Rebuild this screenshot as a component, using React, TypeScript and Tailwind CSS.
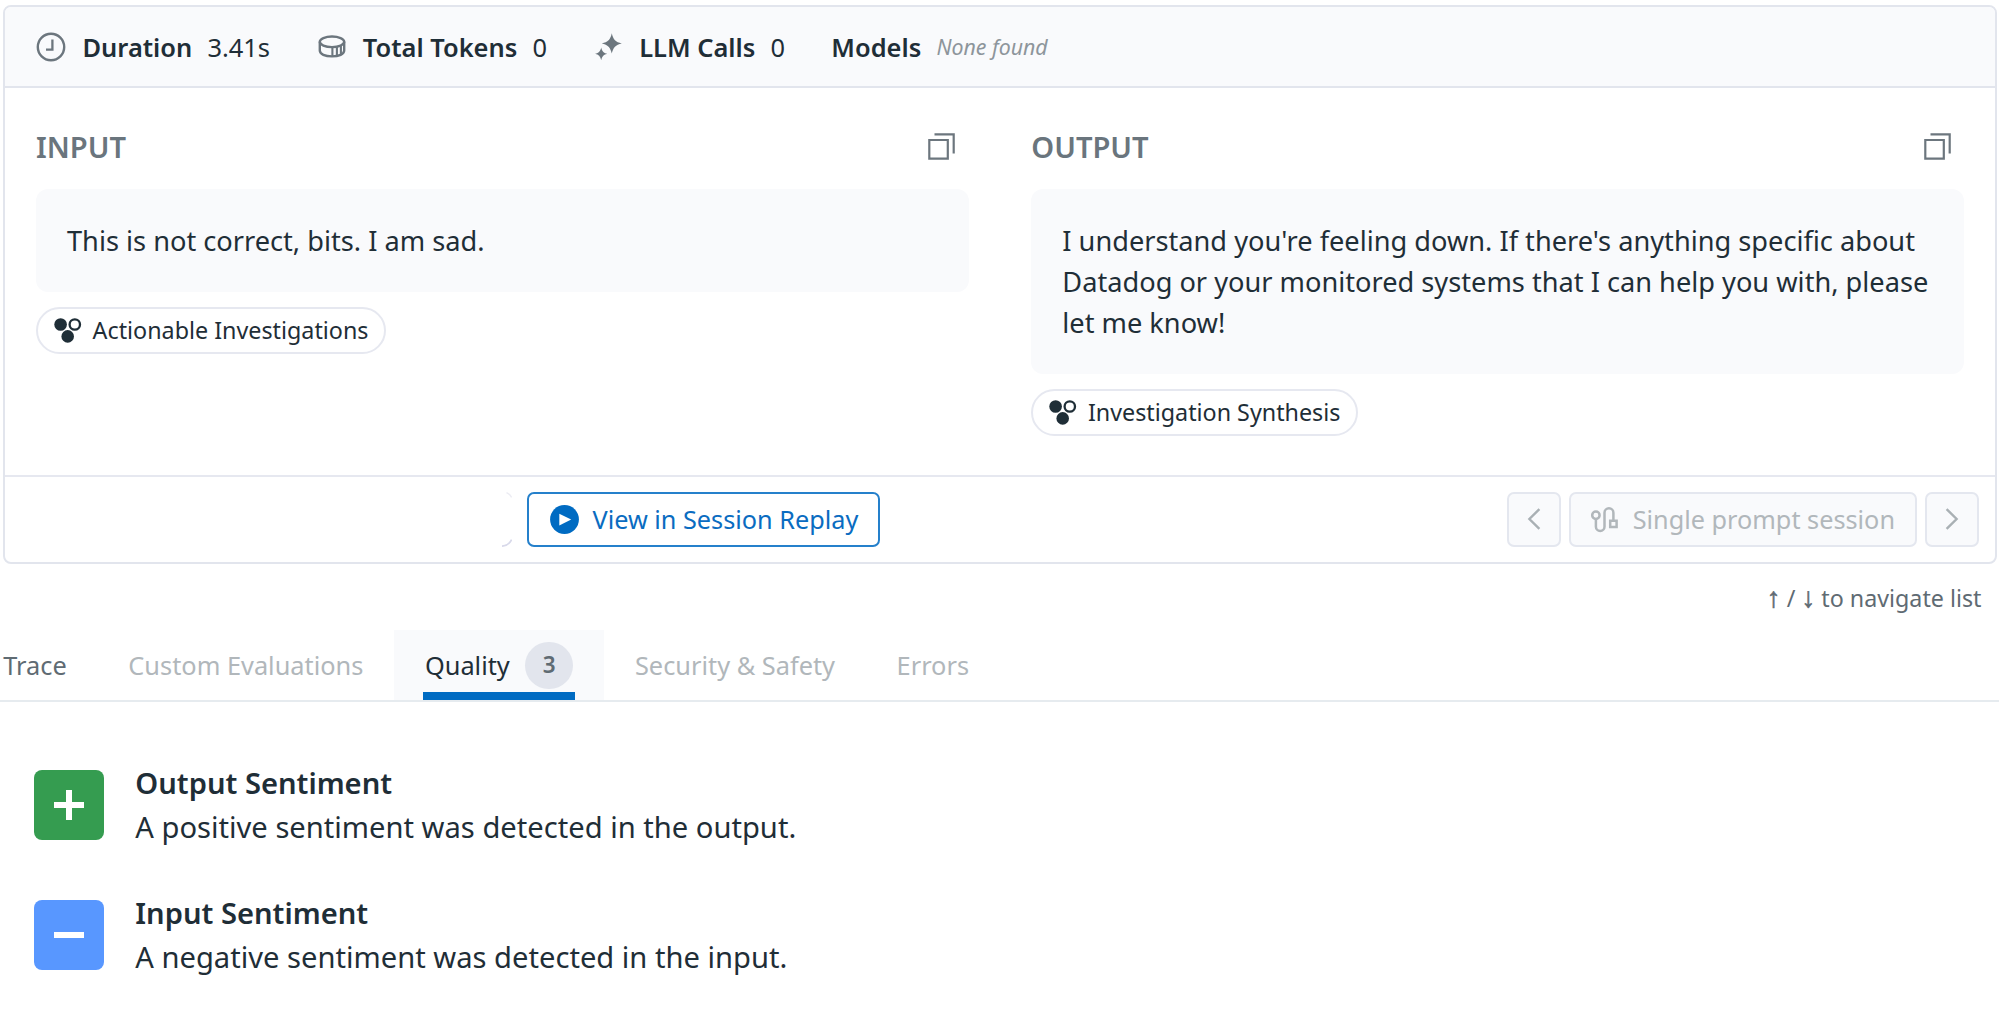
import type { ReactNode } from 'react';

function ClockIcon() {
  return (
    <svg className="h-[30px] w-[30px] shrink-0" viewBox="0 0 30 30" fill="none" stroke="#6c767e">
      <circle cx="15" cy="15" r="13.2" strokeWidth="2.4" />
      <path d="M16.4 7.4v10.2H10" strokeWidth="2.3" />
    </svg>
  );
}

function TokensIcon() {
  return (
    <svg className="h-[23px] w-[28px] shrink-0" viewBox="0 0 28 23" fill="none" stroke="#6c767e" strokeWidth="2.4">
      <ellipse cx="14" cy="6.8" rx="12.2" ry="5.3" />
      <path d="M1.8 6.8v8.7c0 3.6 5.2 5.9 12.2 5.9s12.2-2.3 12.2-5.9V6.8" />
      <path d="M14.4 12v9.5M18.9 11.6v9.2M22.9 10.2v9" strokeWidth="2.1" />
    </svg>
  );
}

function SparkleIcon() {
  return (
    <svg className="h-[28px] w-[27px] shrink-0" viewBox="0 0 27 28" fill="#6c767e">
      <path d="M16.8 0.2C18.2 6.5 20.6 9 26.8 10.4C20.6 11.8 18.2 14.3 16.8 20.6C15.4 14.3 13 11.8 6.8 10.4C13 9 15.4 6.5 16.8 0.2Z" />
      <path d="M6.2 14.4C7.2 18.4 8.5 19.8 12.3 20.8C8.5 21.8 7.2 23.2 6.2 27.2C5.2 23.2 3.9 21.8 0.1 20.8C3.9 19.8 5.2 18.4 6.2 14.4Z" />
    </svg>
  );
}

function CopyIcon() {
  return (
    <svg className="mr-[13.5px] mb-px h-[27px] w-[27px] shrink-0" viewBox="0 0 27 27" fill="none" stroke="#6c767e" strokeWidth="2.2">
      <path d="M1.3 7h18.5v18.6H1.3z" />
      <path d="M6.5 1.3h19.2v19.3" />
    </svg>
  );
}

function DotsIcon() {
  return (
    <svg className="h-[25px] w-[28px] shrink-0" viewBox="0 0 28 25" fill="#1f2e37">
      <circle cx="6.6" cy="6.5" r="6.3" />
      <circle cx="13.7" cy="18.4" r="6.3" />
      <circle cx="20.8" cy="6.5" r="5.2" fill="none" stroke="#1f2e37" strokeWidth="2.3" />
    </svg>
  );
}

function RouteIcon() {
  return (
    <svg className="mb-px h-[27px] w-[27px] shrink-0" viewBox="0 0 27 27" fill="none" stroke="#b1b7bb" strokeWidth="2.5">
      <circle cx="4.9" cy="9.3" r="3.7" />
      <path d="M4.9 13v7.7a4.3 4.3 0 0 0 8.6 0V6.7a4.4 4.4 0 0 1 8.9 0V14" />
      <path d="M19.2 14.7h6.4V21h-6.4z" />
    </svg>
  );
}

function Stat({ label, children }: { label: string; children: ReactNode }) {
  return (
    <div className="flex items-center gap-[15.2px]">
      <span className="font-semibold">{label}</span>
      {children}
    </div>
  );
}

function Panel({ title, text, source }: { title: string; text: string; source: string }) {
  return (
    <section>
      <div className="mb-[24.3px] flex h-9 items-center justify-between">
        <h2 className="text-[29.1px] leading-9 font-semibold text-[#6a757d]">{title}</h2>
        <CopyIcon />
      </div>
      <p className="rounded-xl bg-[#f9fafc] pt-[31.8px] pr-[31px] pb-[29.8px] pl-[31px] text-[27.2px] leading-[40.9px]">{text}</p>
      <div className="mt-[15.3px] inline-flex h-[46.6px] items-center rounded-full border-2 border-[#e6e8f0] pr-[15.4px] pl-[15.8px]">
        <DotsIcon />
        <span className="ml-[10.8px] text-[23.3px] leading-8">{source}</span>
      </div>
    </section>
  );
}

function DisabledButton({ children, className }: { children: ReactNode; className: string }) {
  return (
    <button
      disabled
      className={`flex h-[54.5px] items-center justify-center rounded-[7px] border-2 border-[#e4e7ef] bg-[#f9fafc] text-[#b1b7bb] ${className}`}
    >
      {children}
    </button>
  );
}

function Chevron({ d }: { d: string }) {
  return (
    <svg className="mb-px h-[22px] w-[14px]" viewBox="0 0 14 22" fill="none" stroke="#a9b0b4" strokeWidth="2.4">
      <path d={d} />
    </svg>
  );
}

function Sentiment({ tile, sign, title, text }: { tile: string; sign: string; title: string; text: string }) {
  return (
    <li className="flex h-[88px] items-center">
      <span className={`flex size-[70px] items-center justify-center rounded-lg ${tile}`}>
        <svg className="size-[30px]" viewBox="0 0 30 30" stroke="#fff" strokeWidth="6">
          <path d={sign} />
        </svg>
      </span>
      <div className="ml-[31.3px] text-[29.15px] leading-[44px]">
        <h3 className="font-semibold">{title}</h3>
        <p>{text}</p>
      </div>
    </li>
  );
}

export default function App() {
  return (
    <main className="h-[1019px] w-[1999px] overflow-hidden bg-white pt-[5px] font-['Noto_Sans',sans-serif] text-[#1f2e37]">
      <div className="ml-[3px] flex h-[559px] w-[1994px] flex-col overflow-hidden rounded-lg border-2 border-[#e2e5ed]">
        <header className="flex h-[81px] shrink-0 items-center border-b-2 border-[#e2e5ed] bg-[#f9fafc] pl-[31px] text-[25.45px] leading-9">
          <ClockIcon />
          <div className="ml-[16.5px]">
            <Stat label="Duration">
              <span>3.41s</span>
            </Stat>
          </div>
          <div className="mr-[17px] ml-[47.8px] flex">
            <TokensIcon />
          </div>
          <Stat label="Total Tokens">
            <span>0</span>
          </Stat>
          <div className="mr-[17.2px] ml-[48px] flex">
            <SparkleIcon />
          </div>
          <Stat label="LLM Calls">
            <span>0</span>
          </Stat>
          <div className="ml-[46.3px]">
            <Stat label="Models">
              <span className="pt-px text-[21.3px] text-[#8d959b] italic">None found</span>
            </Stat>
          </div>
        </header>

        <div className="grid h-[387px] shrink-0 grid-cols-2 gap-[62.6px] px-[31px] pt-[41px]">
          <Panel title="INPUT" text="This is not correct, bits. I am sad." source="Actionable Investigations" />
          <Panel
            title="OUTPUT"
            text="I understand you're feeling down. If there's anything specific about Datadog or your monitored systems that I can help you with, please let me know!"
            source="Investigation Synthesis"
          />
        </div>

        <footer className="flex flex-1 items-center justify-between border-t-2 border-[#e6e8f0] pr-[16px] pl-[497px]">
          <div className="flex items-center">
            <svg className="h-[55px] w-[10px]" viewBox="0 0 10 55" fill="none">
              <path d="M4.5 0.6Q8 2.2 9.6 5.4" stroke="#ececf3" strokeWidth="1.4" />
              <path d="M0 54.2Q7 53.5 9.6 47.5" stroke="#d8d9ea" strokeWidth="1.7" />
            </svg>
            <button className="ml-[15.3px] flex h-[54.5px] w-[353px] items-center rounded-[7px] border-2 border-[#2580cb] bg-white pl-[20.7px] text-[25.25px] leading-9 text-[#0a6cc1]">
              <svg className="mb-px h-[29px] w-[29px] shrink-0" viewBox="0 0 29 29">
                <circle cx="14.5" cy="14.5" r="14.4" fill="#006bc2" />
                <path d="M9.3 8.7v11.8L21.2 14.6z" fill="#fff" />
              </svg>
              <span className="mb-px ml-[13.5px] whitespace-nowrap">View in Session Replay</span>
            </button>
          </div>
          <div className="flex items-center gap-2">
            <DisabledButton className="w-[54px]">
              <Chevron d="M12.4 1.2L2.4 11l10 9.8" />
            </DisabledButton>
            <DisabledButton className="w-[348.5px]">
              <RouteIcon />
              <span className="mb-px ml-[15.2px] text-[25.25px] leading-9 whitespace-nowrap">Single prompt session</span>
            </DisabledButton>
            <DisabledButton className="w-[54px]">
              <Chevron d="M1.6 1.2l10 9.8l-10 9.8" />
            </DisabledButton>
          </div>
        </footer>
      </div>

      <div className="flex h-[66px] items-center justify-end pt-px pr-[17.5px] text-[23.25px] leading-8 text-[#5f6b73]">
        <span className="flex items-baseline">
          <span className="w-[17.3px] text-center font-['Liberation_Sans',sans-serif] text-[28px] leading-8 [-webkit-text-stroke:0.6px]">↑</span>
          <span className="w-[17.3px] text-center">/</span>
          <span className="w-[17.3px] text-center font-['Liberation_Sans',sans-serif] text-[28px] leading-8 [-webkit-text-stroke:0.6px]">↓</span>
          <span className="ml-[4.3px]">to navigate list</span>
        </span>
      </div>

      <nav className="flex h-[72px] items-stretch border-b-2 border-[#e6ebef] text-[25.35px] leading-9 text-[#b1b7bb]">
        <span className="flex items-center pr-[30.2px] pl-[3.3px] text-[#5f6b73]">Trace</span>
        <span className="flex items-center pr-[30.2px] pl-[31.4px]">Custom Evaluations</span>
        <span className="relative flex items-center bg-[#f9fafc] pr-[30.2px] pl-[31.4px] text-[#1f2e37]">
          Quality
          <span className="ml-[15px] flex h-[47px] w-[48.6px] items-center justify-center rounded-full bg-[#e2e5ed] text-[22.5px] font-semibold text-[#5f6b73]">
            3
          </span>
          <span className="absolute right-[29px] bottom-0 left-[29px] h-2 bg-[#006bc2]" />
        </span>
        <span className="flex items-center pr-[30.2px] pl-[31.4px]">Security &amp; Safety</span>
        <span className="flex items-center pr-[30.2px] pl-[31.4px]">Errors</span>
      </nav>

      <ul className="flex flex-col gap-[42px] pt-[59px] pl-[34px]">
        <Sentiment
          tile="bg-[#359c50]"
          sign="M0 15h30M15 0v30"
          title="Output Sentiment"
          text="A positive sentiment was detected in the output."
        />
        <Sentiment
          tile="bg-[#5897ff]"
          sign="M0 15h30"
          title="Input Sentiment"
          text="A negative sentiment was detected in the input."
        />
      </ul>
    </main>
  );
}
